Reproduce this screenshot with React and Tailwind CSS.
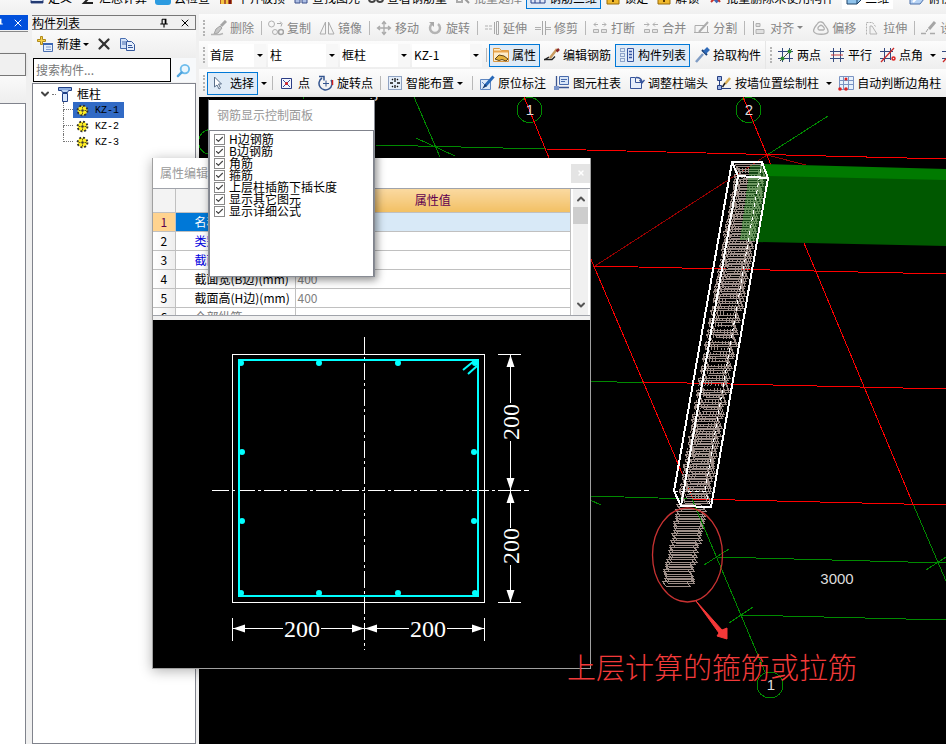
import React, { useState } from 'react';
import { Check, ChevronDown, ChevronUp, X } from 'lucide-react';
import clsx from 'clsx';

const glyphs = {
  define: <><path d="M2 1h12v12H2z" fill="#dfe9f8" stroke="#40558c" /><path d="M2 12h12" stroke="#223a72" strokeWidth="2" /></>,
  sum: <path d="M13 2H4l5 6-5 5h9" fill="none" stroke="#222" strokeWidth="2" />,
  cloud: <><rect x="0" y="0" width="16" height="15" rx="3" fill="#2c9be0" /><path d="M4 10h8l-2-4-3-1z" fill="#fff" /></>,
  slab: <><path d="M2 2h12v12H2z" fill="#b05a2c" /><path d="M3 8h3v6H3zM8 5h2v9H8z" fill="#f4c542" /><path d="M11 7h2v7h-2z" fill="#7a1414" /></>,
  find: <><path d="M2 5h5v8H2zM9 5h5v8H9z" fill="#aebfe4" stroke="#3b4f8a" /><path d="M7 6h2" stroke="#3b4f8a" /></>,
  glasses: <><circle cx="4" cy="9" r="3" fill="none" stroke="#444" strokeWidth="2" /><circle cx="12" cy="9" r="3" fill="none" stroke="#444" strokeWidth="2" /></>,
  batch: <><path d="M2 3h5v9H2zM9 3h4v6" fill="none" stroke="#aaa" strokeWidth="2" /><path d="M9 8l5 5" stroke="#999" strokeWidth="2" /></>,
  grid3d: <path d="M1 13V5l4-3h10v11zM1 9h14M5 2v11M10 2v11" fill="#dfe6f5" stroke="#27408b" />,
  lock: <><path d="M2 6h12v8H2z" fill="#f0b92d" stroke="#9a6a08" /><path d="M5 6V3h6v3" fill="none" stroke="#777" strokeWidth="2" /><path d="M8 8v4" stroke="#5a3a00" strokeWidth="2" /></>,
  purge: <><path d="M3 3l8 9" stroke="#3f66b5" strokeWidth="4" /><path d="M4 12l3-3M10 8l3 4" stroke="#c9342b" strokeWidth="2" /></>,
  cube: <><path d="M1 5l4-3h10v8l-4 4H1z" fill="#8fc3ec" stroke="#1d4268" /><path d="M1 5h10v9M11 5l4-3" fill="none" stroke="#1d4268" /></>,
  top: <><path d="M1 8l5-5h9v6l-4 5H1z" fill="#b7d3f5" stroke="#4a6fa8" /><path d="M4 12l8-8" stroke="#fff" strokeWidth="2" /></>,
  brush: <><path d="M15 1L10 6" stroke="#a6a6a6" strokeWidth="3" /><path d="M9 6l2 2-4 5-4 1 2-5z" fill="#c6c6c6" stroke="#a2a2a2" /><path d="M0 14.500h9l3-1" stroke="#b4b4b4" strokeWidth="1.500" fill="none" /></>,
  copy: <><circle cx="3.500" cy="4" r="3" fill="none" stroke="#b0b0b0" /><circle cx="7" cy="12" r="2.500" fill="none" stroke="#b0b0b0" /><circle cx="13" cy="12" r="2.500" fill="none" stroke="#a4a4a4" strokeWidth="1.500" /><path d="M9 3.500h4M12 1.500l2 2-1 3" fill="none" stroke="#a8a8a8" /></>,
  mirror: <path d="M6.500 2v12H1zM9.500 2v12H15z" fill="#f4f4f4" stroke="#acacac" />,
  move: <path d="M8 2v12M2 8h12M6 4l2-2.500L10 4M6 12l2 2.500 2-2.500M4 6L1.500 8 4 10M12 6l2.500 2-2.500 2" fill="none" stroke="#aaaaaa" strokeWidth="1.300" />,
  rotate: <><path d="M5 4a5 5 0 1 0 6 0" fill="none" stroke="#b4b4b4" strokeWidth="2.500" /><path d="M2 2h5v5z" fill="#a8a8a8" /></>,
  extend: <><path d="M1 6h7M1 9h7" stroke="#b0b0b0" strokeDasharray="3 1" /><path d="M10.500 2v12M14.500 1.500v13h-2v-13z" stroke="#a8a8a8" fill="none" /></>,
  trim: <><path d="M0 7.500h6M0 9.500h6M11 7.500h5M11 9.500h5" stroke="#b0b0b0" /><path d="M7.500 1v14M10.500 1v14" stroke="#a8a8a8" /></>,
  split: <><path d="M2 4.500h4M10 4.500h4M4 2.500l-2 2 2 2M12 2.500l2 2-2 2" fill="none" stroke="#b0b0b0" /><path d="M1.500 9.500h5v3h-5zM9.500 9.500h5v3h-5z" fill="#e4e4e4" stroke="#b0b0b0" /></>,
  merge: <><path d="M1 4.500h5M10 4.500h5M4 2.500l2 2-2 2M12 2.500l-2 2 2 2" fill="none" stroke="#b0b0b0" /><path d="M1.500 9.500h5v3h-5zM9.500 9.500h5v3h-5z" fill="#e4e4e4" stroke="#b0b0b0" /></>,
  divide: <><path d="M1 5.500h9M0 12.500h15M1 5.500v7" stroke="#acacac" fill="none" /><path d="M14 2L5 12" stroke="#acacac" strokeWidth="2" /><path d="M13.500 6v7" stroke="#acacac" /></>,
  align: <><path d="M2.500 1v14" stroke="#a8a8a8" /><path d="M5 3.500h4v3H5zM5 9.500h8v4H5z" fill="#e0e0e0" stroke="#b0b0b0" /></>,
  offset: <><path d="M5 3c2-2 5-1 6 1s5 5 4 8-12 3-14 0 2-6 4-9z" fill="none" stroke="#b0b0b0" strokeWidth="1.300" /><path d="M6.500 6c1-1 2-1 3 0s3 3 1 4H6c-2-1-1-3 .5-4z" fill="none" stroke="#b0b0b0" strokeWidth="1.300" /></>,
  stretch: <><path d="M2.500 14.500v-12h6l3 4" fill="none" stroke="#b0b0b0" strokeDasharray="2 1" /><path d="M6 6h2l5 8H6z" fill="#f2f2f2" stroke="#b4b4b4" /></>,
  setPen: <><path d="M14 2L8 9" stroke="#a6a6a6" strokeWidth="3" /><path d="M0 13.500h5M9 13.500h5" stroke="#aaa" strokeWidth="1.500" /><path d="M7 9l-2 3" stroke="#999" /></>,
  property: <><path d="M.5 1.500h6l2 2h7v11H.5z" fill="#fdebcb" stroke="#d99843" /><path d="M1 4.500h14" stroke="#eaa64e" strokeWidth="2" /><path d="M2 12l4-4 5 1 4 3-2 2-4-1.500-3 1z" fill="#e6b23c" stroke="#5e451a" /></>,
  editRebar: <><path d="M0 12.500h8l3-3M0 13l5-3" fill="none" stroke="#222" strokeWidth="1.300" /><path d="M13 2L6 11" stroke="#c89a5e" strokeWidth="2.500" /><path d="M15 2l-2.500 2.500" stroke="#8c2626" strokeWidth="2.500" /></>,
  list: <><path d="M1.500 1.500h4v3h-4zM1.500 6.500h4v3h-4zM1.500 11.500h4v3h-4z" fill="none" stroke="#3f5c9c" strokeDasharray="1 1" /><path d="M8.500 1.500h6v13h-6z" fill="#dce6f8" stroke="#3656a0" /><path d="M10 4.500h3M10 7.500h3M10 10.500h3" stroke="#3656a0" strokeWidth="1.500" /></>,
  dropper: <><path d="M9 7l-7 8" stroke="#7f9cc4" strokeWidth="2.500" /><path d="M8 3l5 5" stroke="#163d75" strokeWidth="2" /><path d="M14.500 1.500l-4 4" stroke="#2f6ab8" strokeWidth="4" /></>,
  twoPoint: <><path d="M4.500 1v14M11.500 1v14M0 4.500h15M0 11.500h15" stroke="#354a80" /><path d="M2 14L14 2" stroke="#444" /><circle cx="4.500" cy="11.500" r="2" fill="#2c8a2c" /><circle cx="11.500" cy="4.500" r="2" fill="#2c8a2c" /></>,
  parallel: <><path d="M4.500 1v14M11.500 1v14" stroke="#354a80" /><path d="M1 4.500h14M1 11.500h14" stroke="#354a80" /><path d="M2 8h12" stroke="#cc3a3a" /></>,
  angle: <><path d="M4.500 1v14M10.500 1v12M0 4.500h13M0 11.500h10" stroke="#354a80" /><path d="M1 15L14 1" stroke="#cc2a2a" strokeWidth="1.300" /><circle cx="13.500" cy="11.500" r="1.500" fill="none" stroke="#d22" strokeWidth="1.500" /></>,
  cursor: <path d="M3.500 2v10l2.500-2 2 4 1.500-1-2-4h3z" fill="#fff" stroke="#5a6f8a" />,
  point: <><path d="M2.500 3.500h10v10h-10z" fill="#f4f6ff" stroke="#2b3d85" /><path d="M4 5l7 7M11 5l-7 7" stroke="#3a4c9a" /><circle cx="7.500" cy="8.500" r="1.500" fill="#d22" /></>,
  rotPoint: <><path d="M4 3a6.500 6.500 0 1 0 9 2" fill="none" stroke="#34558f" strokeWidth="1.500" /><path d="M1 1.500h5v4" fill="none" stroke="#34558f" strokeWidth="1.500" /><path d="M8 5.500v6M5 8.500h6" stroke="#34558f" /><path d="M14.500 5v5" stroke="#c22" strokeWidth="1.500" /></>,
  smart: <><path d="M1.500 1.500h13v13h-13z" fill="#e6effa" stroke="#31538a" strokeDasharray="1 1" /><path d="M8 3v4M8 10v3M3 8h3M10 8h3M5 4l1 1M11 4l-1 1M5 12l1-1M11 12l-1-1" stroke="#111" strokeWidth="1.300" /></>,
  note: <><path d="M1.500 4.500h10v10h-10z" fill="#dce9f8" stroke="#5e86c0" /><path d="M3 7l3 3 3-3" fill="none" stroke="#5e86c0" /><path d="M14.500 1.500L6 11" stroke="#2869b8" strokeWidth="3" /><path d="M6 9l-3 5 5-3" fill="#153b70" /></>,
  table: <><path d="M2.500 1v11.500H15" stroke="#3a5591" strokeWidth="1.300" fill="none" /><path d="M5.500 1.500h9v8h-9z" fill="#d9e6f7" stroke="#496bac" /><path d="M7 4.500h6M7 6.500h4" stroke="#496bac" /><path d="M0 11h5v4H0z" fill="#7b95cb" /></>,
  adjust: <><path d="M1.500 2.500h5v5h6v6h-11z" fill="#e6eefb" stroke="#37559b" /><path d="M7 2.500c4 0 6 1 6 5M10.500 5l2.500 3 2.500-3" fill="none" stroke="#37559b" strokeWidth="1.300" /></>,
  wall: <><path d="M1.500 1.500h4v4h-4zM1.500 10.500h4v4h-4z" fill="#9fb6e6" stroke="#263f82" /><path d="M3.500 5v5M6 13.500h9" stroke="#263f82" /><path d="M14 3L9 9" stroke="#d8ad55" strokeWidth="2.500" /><path d="M9 8l-2.500 4" stroke="#222" strokeWidth="1.500" /></>,
  auto: <><path d="M1.500 1.500h14v13h-14zM1 5.500h14M1 9.500h14M5.500 1v14M10.500 1v14" fill="#e8f1fc" stroke="#7a93c2" /><circle cx="8" cy="4" r="1.500" fill="#d22" /><circle cx="2" cy="14" r="1.800" fill="#d22" /><circle cx="8" cy="14" r="1.800" fill="#d22" /></>,
  create: <><path d="M6.500 7.500h9v8h-9z" fill="#e4edfb" stroke="#4a6fb0" /><path d="M6 8h10" stroke="#3b66b5" strokeWidth="2" /><path d="M9 11h5M9 13.500h5" stroke="#7f9bd0" /><path d="M3.500.5h2v3h3v2h-3v3h-2v-3h-3v-2h3z" fill="#f8d34a" stroke="#b08a1c" /></>,
  pages: <><path d="M1.500 2.500h5l3 3v7h-8z" fill="#d3e2f8" stroke="#4a6fb0" /><path d="M3 6h4M3 8h4" stroke="#4a6fb0" /><path d="M7.500 5.500h5l3 3v6h-8z" fill="#e6effc" stroke="#35589c" /><path d="M9 9.500h4M9 11.500h5" stroke="#35589c" /></>,
  column: <><path d="M1.500 1.500h13v3h-3l-1 2h-5l-1-2h-3z" fill="#bcd4f4" stroke="#1f3f86" /><path d="M5.500 7.500h5v8h-5z" fill="#d7e6fb" stroke="#1f3f86" /><path d="M2 3h12" stroke="#5c84cc" /></>,
  gear: <><circle cx="8" cy="8" r="6" fill="#ffee22" stroke="#333" strokeWidth="2.500" strokeDasharray="2.350 2.350" /><circle cx="8" cy="8" r="4.500" fill="#ffee22" /><circle cx="8" cy="8" r="1.500" fill="#333" /><path d="M8 3.500v2M8 10.500v2M3.500 8h2M10.500 8h2" stroke="#333" /></>,
  pin: <path d="M5 2h6v7M5 2v7M10 2v7M2 9.500h12M8 10v5" fill="none" stroke="currentColor" strokeWidth="1.800" />,
  search: <><circle cx="9.500" cy="6.500" r="4.500" fill="#eaf6fd" stroke="#6dbcec" strokeWidth="2" /><path d="M6 10l-4 4" stroke="#4fa3dd" strokeWidth="2.500" strokeLinecap="round" /></>,
};

function Glyph({ name, className = 'size-4' }) {
  return (
    <svg viewBox="0 0 16 16" className={clsx('shrink-0', className)} aria-hidden="true">
      {glyphs[name]}
    </svg>
  );
}

function Caret() {
  return (
    <svg viewBox="0 0 6 3" className="h-[3px] w-1.5 shrink-0" aria-hidden="true">
      <path d="M0 0h6L3 3z" fill="currentColor" />
    </svg>
  );
}

function Tool({ icon, label, active, disabled, menu }) {
  return (
    <button
      type="button"
      disabled={disabled}
      className={clsx(
        'flex h-[23px] shrink-0 items-center gap-[3px] whitespace-nowrap border px-[3px] leading-4',
        active ? 'border-[#0078d7] bg-[#dfebf7]' : 'border-transparent',
        disabled ? 'text-[#858585]' : 'text-black'
      )}
    >
      <Glyph name={icon} />
      <span>{label}</span>
      {menu && <span className="pr-0.5"><Caret /></span>}
    </button>
  );
}

function SplitArrow({ label }) {
  return (
    <button type="button" aria-label={label} className="flex h-[23px] w-[11px] shrink-0 items-center justify-center">
      <Caret />
    </button>
  );
}

function Sep() {
  return (
    <span className="flex w-1.5 shrink-0 justify-center">
      <span className="h-3.5 w-px bg-[#b8b8b8]" />
    </span>
  );
}

function Grip() {
  return <span className="ml-1 mr-0.5 h-4 shrink-0 border-l-2 border-dotted border-[#b4b4b4]" />;
}

function Combo({ label, value, className }) {
  return (
    <span className={clsx('relative h-[23px] shrink-0 bg-white', className)}>
      <select
        aria-label={label}
        defaultValue={value}
        className="h-full w-full appearance-none bg-transparent pl-0.5 leading-4 outline-none"
      >
        <option>{value}</option>
      </select>
      <span className="pointer-events-none absolute inset-y-0 right-0 flex w-3 items-center justify-center bg-[#f7f7f7]">
        <Caret />
      </span>
    </span>
  );
}

function TopBar() {
  return (
    <div className="flex h-3.5 shrink-0 items-end overflow-hidden bg-gradient-to-b from-[#f7f7f7] to-[#f0f0f0] pb-[5px] pl-[25px]">
      <Tool icon="define" label="定义" />
      <Tool icon="sum" label="汇总计算" />
      <Tool icon="cloud" label="云检查" />
      <Tool icon="slab" label="平齐板顶" />
      <Tool icon="find" label="查找图元" />
      <Tool icon="glasses" label="查看钢筋量" />
      <Tool icon="batch" label="批量选择" disabled />
      <Tool icon="grid3d" label="钢筋三维" active />
      <Tool icon="lock" label="锁定" />
      <Tool icon="lock" label="解锁" />
      <Tool icon="purge" label="批量删除未使用构件" />
      <span className="ml-1 flex h-[23px] shrink-0 bg-white">
        <Tool icon="cube" label="三维" />
      </span>
      <span className="w-3 shrink-0" />
      <Tool icon="top" label="俯视" />
    </div>
  );
}

function Toolbars() {
  const band = 'flex shrink-0 items-center overflow-hidden bg-gradient-to-b from-[#fcfcfc] to-[#eeeeee]';
  return (
    <>
      <div className={clsx(band, 'h-[27px]')}>
        <Grip />
        <Tool icon="brush" label="删除" disabled />
        <Sep />
        <Tool icon="copy" label="复制" disabled />
        <Tool icon="mirror" label="镜像" disabled />
        <Sep />
        <Tool icon="move" label="移动" disabled />
        <Tool icon="rotate" label="旋转" disabled />
        <Sep />
        <Tool icon="extend" label="延伸" disabled />
        <Tool icon="trim" label="修剪" disabled />
        <Sep />
        <Tool icon="split" label="打断" disabled />
        <Tool icon="merge" label="合并" disabled />
        <Tool icon="divide" label="分割" disabled />
        <Sep />
        <Tool icon="align" label="对齐" disabled menu />
        <Tool icon="offset" label="偏移" disabled />
        <Tool icon="stretch" label="拉伸" disabled />
        <Sep />
        <Tool icon="setPen" label="设置" disabled />
      </div>
      <div className={clsx(band, 'h-7')}>
        <Grip />
        <div className="mx-px flex shrink-0 gap-0.5">
          <Combo label="楼层" value="首层" className="w-[58px]" />
          <Combo label="类型" value="柱" className="w-[70px]" />
          <Combo label="构件类型" value="框柱" className="w-[70px]" />
          <Combo label="构件" value="KZ-1" className="w-[70px]" />
        </div>
        <Sep />
        <Tool icon="property" label="属性" active />
        <Tool icon="editRebar" label="编辑钢筋" />
        <Tool icon="list" label="构件列表" active />
        <Tool icon="dropper" label="拾取构件" />
        <span className="h-full w-px shrink-0 bg-[#e6e6e6]" />
        <Grip />
        <Tool icon="twoPoint" label="两点" />
        <Tool icon="parallel" label="平行" />
        <Tool icon="angle" label="点角" />
        <SplitArrow label="点角选项" />
        <Tool icon="angle" label="三点" />
      </div>
      <div className={clsx(band, 'h-7')}>
        <Grip />
        <Tool icon="cursor" label="选择" active />
        <SplitArrow label="选择选项" />
        <Sep />
        <Tool icon="point" label="点" />
        <Tool icon="rotPoint" label="旋转点" />
        <Sep />
        <Tool icon="smart" label="智能布置" menu />
        <Sep />
        <Tool icon="note" label="原位标注" />
        <Tool icon="table" label="图元柱表" />
        <Tool icon="adjust" label="调整柱端头" />
        <Tool icon="wall" label="按墙位置绘制柱" />
        <SplitArrow label="绘制选项" />
        <Tool icon="auto" label="自动判断边角柱" />
      </div>
    </>
  );
}

function DockStrip() {
  return (
    <aside className="flex w-7 shrink-0 flex-col">
      <div className="flex h-[15px] items-center justify-between bg-[#0050dc] pr-1 text-white">
        <Glyph name="pin" className="-ml-1.5 size-2.5" />
        <X className="size-3" strokeWidth={2} />
      </div>
      <div className="mt-px h-[22px] border-t border-[#888] bg-[#f0f0f0]" />
      <div className="mr-0.5 h-[23px] border border-l-0 border-[#777] bg-[#f0f0f0] shadow" />
      <div className="mr-0.5 h-[27px] bg-gradient-to-b from-[#fafafa] to-[#eee]" />
      <div className="mr-0.5 flex-1 border-r border-t border-[#80838c] bg-white" />
    </aside>
  );
}

function ComponentList() {
  const [selected, setSelected] = useState('KZ-1');

  return (
    <aside className="ml-1 flex w-[164px] shrink-0 flex-col">
      <div className="flex h-[15px] items-center border border-l-0 border-[#777] bg-[#f0f0f0] pr-1">
        <h2 className="flex-1 whitespace-nowrap text-[12px] leading-3">构件列表</h2>
        <Glyph name="pin" className="mr-2.5 size-2.5" />
        <X className="size-3" strokeWidth={2} />
      </div>
      <div className="flex h-7 items-center bg-gradient-to-b from-[#fafafa] to-[#eeeeee] pl-[5px]">
        <button type="button" className="flex items-center gap-1">
          <Glyph name="create" />
          <span>新建</span>
          <span className="-ml-0.5"><Caret /></span>
        </button>
        <button type="button" aria-label="删除" className="ml-1.5">
          <X className="size-[18px] text-[#333]" strokeWidth={3} />
        </button>
        <button type="button" aria-label="复制" className="ml-1.5">
          <Glyph name="pages" />
        </button>
      </div>
      <div className="flex h-6 items-stretch pl-px">
        <input
          aria-label="搜索构件"
          placeholder="搜索构件..."
          className="w-[138px] border border-black bg-white px-0.5 text-[12px] outline-none placeholder:text-[#777]"
        />
        <button type="button" aria-label="搜索" className="flex flex-1 items-center justify-center bg-[#f7f9fb]">
          <Glyph name="search" className="size-[15px]" />
        </button>
      </div>
      <div className="mt-px flex-1 border border-[#80838c] bg-white pl-1.5 pt-0.5">
        <div className="flex h-4 items-center">
          <ChevronDown className="size-3 text-[#444]" strokeWidth={4} />
          <span className="mx-px w-1 border-t border-dotted border-[#777]" />
          <Glyph name="column" />
          <span className="ml-1 leading-4">框柱</span>
        </div>
        <ul className="ml-6">
          {['KZ-1', 'KZ-2', 'KZ-3'].map((name) => (
            <li key={name} className="flex h-4">
              <span className="flex w-2.5 flex-col">
                <span className="h-2 border-b border-l border-dotted border-[#777]" />
                {name !== 'KZ-3' && <span className="h-2 border-l border-dotted border-[#777]" />}
              </span>
              <button
                type="button"
                onClick={() => setSelected(name)}
                className={clsx(
                  "flex h-4 items-center gap-1 pl-[3px] pr-1 font-['Liberation_Mono','Noto_Sans_CJK_SC',monospace] text-[10px]",
                  selected === name && 'bg-[#316ac5]'
                )}
              >
                <Glyph name="gear" className="size-[13px]" />
                <span className="ml-0.5 w-[25px] text-left">{name}</span>
              </button>
            </li>
          ))}
        </ul>
      </div>
    </aside>
  );
}

const lerp = (a, b, t) => a + (b - a) * t;

// Small repeatable noise, so that the rebar cage looks the same on each render
const noise = (n) => {
  const v = Math.sin(n * 12.9898) * 43758.5453;
  return v - Math.floor(v);
};

function stirrups() {
  const out = [];
  let y = 0;
  let i = 0;
  while (y < 330) {
    const t = y / 330;
    const cx = lerp(0, -57, t);
    const l = Math.round(735 + cx + noise(i) * 3);
    const r = Math.round(766 + cx - noise(i + 50) * 3);
    const top = Math.round(164 + y);
    out.push(`M${l} ${top}H${r - 5}L${r} ${top + 12}H${l + 6}Z`);
    if (noise(i + 9) > 0.35) out.push(`M${l + 8} ${top + 5}H${r - 3}`);
    const sparse = y > 130 && y < 250;
    y += sparse ? (i % 3 === 0 ? 8 : 2) : 2 + (i % 2);
    i += 1;
  }
  return out.join('');
}

function verticalBars() {
  const out = [];
  for (let k = 0; k < 9; k++) {
    const x = 737 + k * 3;
    const drop = k > 4 ? 10 : 3;
    out.push(`M${x} ${165 + drop}L${x - 57} ${491 + drop}`);
  }
  return out.join('');
}

function looseStirrups() {
  const out = [];
  for (let i = 0; i < 33; i++) {
    const y = Math.round(508 + i * 2.4);
    const x = Math.round(lerp(676, 661, i / 32) + noise(i) * 3);
    const w = 30 - Math.round(noise(i + 20) * 3);
    out.push(`M${x} ${y - 4}H${x + w - 4}L${x + w} ${y + 1}H${x + 4}Z`);
  }
  return out.join('');
}

function Viewport() {
  return (
    <main className="relative min-h-0 flex-1 overflow-hidden bg-black">
      <svg
        viewBox="199 97 747 647"
        preserveAspectRatio="xMinYMin slice"
        className="absolute inset-0 h-full w-full"
        role="img"
        aria-label="钢筋三维视图"
      >
        <g fill="none" stroke="#008a00" shapeRendering="crispEdges">
          <path d="M375 145L546 149M414 97l26 60M416 138l39 18M767 155l61-39M303 97l3 6" />
          <path d="M590 381l53 2M590 496l102 3M590 500l11 5M717 557l229 6M741 615l205 5" />
          <path d="M704 565l25-16M729 623l24-16M926 570l20-13M913 504l33 77" />
          <circle cx="211" cy="142" r="12.5" />
          <circle cx="529.5" cy="110" r="12.5" />
          <circle cx="748.5" cy="110" r="12.5" />
          <circle cx="770" cy="685" r="13" />
        </g>
        <g fill="none" stroke="#990000" shapeRendering="crispEdges">
          <path d="M767 155L595 266M767 155l39 10" />
        </g>
        <g fill="none" stroke="#ff0000" shapeRendering="crispEdges">
          <path d="M546 149L946 159M594 266l352 8M643 382l303 7M692 499l254 6" />
          <path d="M524 97l25 61M743 97l28 68M590 257l103 242M804 243l109 261" />
        </g>
        <path d="M763 164l183 5v12l-178-4z" fill="#007a00" />
        <path d="M768 176l178 4v66l-189-4z" fill="#005800" />
        <g shapeRendering="crispEdges" fill="none">
          <path d={stirrups()} stroke="#9e8f89" />
          <path d={verticalBars()} stroke="#9e8f89" strokeDasharray="5 3 2 2" />
          <path d={looseStirrups()} stroke="#9e8f89" />
          <path d="M692 499L765 672" stroke="#008a00" />
          <path d="M750 165h13l4 12-11 64-16-1z" fill="#2fa02f" fillOpacity="0.45" />
          <path d="M762 162L705 491M674 491h31l6 16" stroke="#fff" strokeDasharray="4 3" />
        </g>
        <path
          d="M732 162h30l6 16-30-2zM732 162L674 491l7 15 30 1L768 178M738 176L681 506"
          fill="none"
          stroke="#fff"
          strokeWidth="2"
          shapeRendering="crispEdges"
        />
        <g fill="#dddddd" fontFamily="Liberation Sans, sans-serif" fontSize="15" textAnchor="middle">
          <text x="530" y="115">1</text>
          <text x="749" y="115">2</text>
          <text x="771" y="690">1</text>
          <text x="837" y="584">3000</text>
          <text x="374" y="101">3</text>
        </g>
        <ellipse cx="687.500" cy="555" rx="35" ry="47" fill="none" stroke="#c83232" strokeWidth="1.300" />
        <path d="M696 601L722 630l5-2v11l-10-3 2-3z" fill="#f53838" stroke="#f53838" />
      </svg>
    </main>
  );
}

const bars = [
  [241, 363], [319, 363], [398, 363], [475, 363],
  [241, 593], [319, 593], [398, 593], [475, 593],
  [242, 452], [242, 521], [474, 452], [474, 521],
];

function SectionView() {
  return (
    <svg viewBox="153 320 437 348" className="block w-full bg-black" role="img" aria-label="截面 400×400">
      <g fill="none" stroke="#fff" shapeRendering="crispEdges">
        <path d="M232.500 354.500h252v248h-252z" />
        <path d="M364.500 337v313M212 490.500h317" strokeDasharray="17 3 3 3" />
        <path d="M498 354.500h23M498 490.500h23M498 602.500h23M232.500 618v23M484.500 618v23" />
        <path d="M510.500 355v48M510.500 441v87M510.500 565v37M233 628.500h50M321 628.500h88M447 628.500h37" />
      </g>
      <path
        d="M510.500 355l4 12h-8zM510.500 490l4-12h-8zM510.500 491l4 12h-8zM510.500 602l4-12h-8zM233 628.500l12-4v8zM364 628.500l-12-4v8zM365 628.500l12-4v8zM484 628.500l-12-4v8z"
        fill="#fff"
      />
      <path d="M239 360h239v236h-239z" fill="none" stroke="#00ffff" strokeWidth="2" />
      <path d="M463 370l11-9M468 374l9-8" stroke="#00ffff" strokeWidth="2" />
      {bars.map(([x, y]) => (
        <circle key={`${x}-${y}`} cx={x} cy={y} r="3" fill="#00ffff" />
      ))}
      <g fill="#fff" fontFamily="Liberation Serif, serif" fontSize="24" textAnchor="middle">
        <text x="302" y="637">200</text>
        <text x="428" y="637">200</text>
        <text transform="translate(519 422) rotate(-90)">200</text>
        <text transform="translate(519 546) rotate(-90)">200</text>
      </g>
    </svg>
  );
}

const rows = [
  { name: '名称', value: 'KZ-1', tone: 'text-white' },
  { name: '类别', value: '框架柱', tone: 'text-[#0000e0]' },
  { name: '截面编辑', value: '否', tone: 'text-[#0000e0]' },
  { name: '截面宽(B边)(mm)', value: '400', tone: 'text-black' },
  { name: '截面高(H边)(mm)', value: '400', tone: 'text-black' },
  { name: '全部纵筋', value: '', tone: 'text-[#777]' },
];

function PropertyWindow() {
  return (
    <section className="absolute left-[152px] top-[158px] w-[439px] border-x border-b border-[#a0a0a0] bg-[#f0f0f0] shadow-[0_2px_12px_rgba(0,0,0,0.3)]">
      <header className="flex h-[30px] items-center bg-white pl-[7px]">
        <h2 className="flex-1 text-[12px] text-[#999]">属性编辑器</h2>
        <button type="button" aria-label="关闭" className="flex size-[19px] items-center justify-center bg-[#e4e4e4] text-white">
          <X className="size-2" strokeWidth={4} />
        </button>
      </header>
      <div className="flex h-32 overflow-hidden border-y border-[#a0a3aa] bg-white">
        <div className="min-w-0 flex-1 overflow-hidden">
          <table className="w-full table-fixed border-collapse">
            <thead>
              <tr className="h-[23px] leading-4">
                <th className="w-[22px] border-b border-r border-[#c0c0c0] bg-[#f3f3f3]" aria-label="序号" />
                <th className="w-[120px] border-b border-r border-[#c0c0c0] bg-[#f3f3f3] font-normal">属性名称</th>
                <th className="border-b border-r border-[#c0c0c0] bg-gradient-to-b from-[#fad9a0] to-[#f2c063] font-normal text-[#600050]">
                  属性值
                </th>
              </tr>
            </thead>
            <tbody>
              {rows.map((row, i) => (
                <tr key={row.name} className="h-[19px] leading-4">
                  <td
                    className={clsx(
                      'border-b border-r border-[#c0c0c0] text-center',
                      i === 0 ? 'bg-[#ffd38f] text-[#600050]' : 'bg-gradient-to-r from-white to-[#eee]'
                    )}
                  >
                    {i + 1}
                  </td>
                  <td
                    className={clsx(
                      'whitespace-nowrap border-b border-r border-[#c0c0c0] pl-[19px]',
                      row.tone,
                      i === 0 && 'bg-[#0078d7]'
                    )}
                  >
                    {row.name}
                  </td>
                  <td
                    className={clsx(
                      'border-b border-r border-[#c0c0c0] pl-0.5 text-[#808080]',
                      i === 0 && 'bg-[#d8e9f7]'
                    )}
                  >
                    {row.value}
                  </td>
                </tr>
              ))}
            </tbody>
          </table>
        </div>
        <div className="mx-0.5 flex w-[15px] flex-col items-center bg-[#f0f0f0] py-1 text-[#555]">
          <ChevronUp className="size-3" strokeWidth={4} />
          <span className="mt-0.5 h-[17px] w-full bg-[#cdcdcd]" />
          <ChevronDown className="mt-auto size-3" strokeWidth={4} />
        </div>
      </div>
      <div className="h-1" />
      <SectionView />
    </section>
  );
}

const displayOptions = [
  'H边钢筋',
  'B边钢筋',
  '角筋',
  '箍筋',
  '上层柱插筋下插长度',
  '显示其它图元',
  '显示详细公式',
];

function DisplayPanel() {
  const [hidden, setHidden] = useState([]);

  const toggle = (name) => {
    setHidden((prev) => (prev.includes(name) ? prev.filter((n) => n !== name) : [...prev, name]));
  };

  return (
    <section className="absolute left-[208px] top-[99px] flex h-[178px] w-[167px] flex-col border border-[#888c94] border-t-black bg-white shadow-[2px_3px_8px_rgba(0,0,0,0.45)]">
      <h2 className="flex h-[30px] items-center pl-2 text-[12px] leading-4 text-[#999]">钢筋显示控制面板</h2>
      <div className="flex-1 border border-b-0 border-[#80838c] pl-1 pt-[2px]">
        {displayOptions.map((name) => (
          <label key={name} className="flex h-3 items-center gap-1 whitespace-nowrap leading-3">
            <span className="grid size-[11px] place-items-center">
              <input
                type="checkbox"
                checked={!hidden.includes(name)}
                onChange={() => toggle(name)}
                className="col-start-1 row-start-1 size-[11px] appearance-none border border-[#8a8a8a] bg-white"
              />
              {!hidden.includes(name) && (
                <Check className="pointer-events-none col-start-1 row-start-1 size-[9px] text-[#444]" strokeWidth={3} />
              )}
            </span>
            {name}
          </label>
        ))}
      </div>
    </section>
  );
}

export default function App() {
  return (
    <div className="relative flex h-screen flex-col overflow-hidden bg-[#f0f0f0] font-['Noto_Sans_CJK_SC','Liberation_Sans',sans-serif] text-[12px] text-black">
      <TopBar />
      <div className="flex min-h-0 flex-1">
        <div className="flex shrink-0 pt-px">
          <DockStrip />
          <ComponentList />
        </div>
        <div className="ml-[3px] flex min-w-0 flex-1 flex-col">
          <Toolbars />
          <Viewport />
        </div>
      </div>

      {/* Floating windows */}
      <PropertyWindow />
      <DisplayPanel />
      <p className="pointer-events-none absolute left-[567px] top-[646px] whitespace-nowrap text-[29px] font-light leading-10 text-[#f23a3a]">
        上层计算的箍筋或拉筋
      </p>
    </div>
  );
}
